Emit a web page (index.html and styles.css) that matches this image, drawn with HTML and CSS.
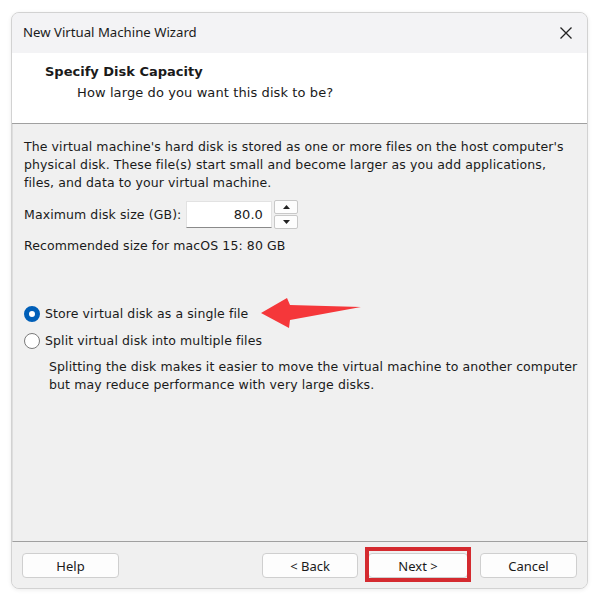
FILE: index.html
```html
<!DOCTYPE html>
<html>
<head>
<meta charset="utf-8">
<link rel="stylesheet" href="styles.css">
</head>
<body>
<div class="window">
  <div class="titlebar">
    <span class="title">New Virtual Machine Wizard</span>
    <svg class="close" width="14" height="14" viewBox="0 0 14 14"><path d="M1.5 1.5 L12.5 12.5 M12.5 1.5 L1.5 12.5" stroke="#222" stroke-width="1.3" fill="none"/></svg>
  </div>
  <div class="header">
    <div class="h-title">Specify Disk Capacity</div>
    <div class="h-sub">How large do you want this disk to be?</div>
  </div>
  <div class="content">
    <p class="desc">The virtual machine's hard disk is stored as one or more files on the host computer's<br>physical disk. These file(s) start small and become larger as you add applications,<br>files, and data to your virtual machine.</p>
    <div class="size-row">
      <span class="label">Maximum disk size (GB):</span>
      <div class="spin-input">80.0</div>
      <div class="spin-btns">
        <div class="spin-btn"><svg width="7" height="4" viewBox="0 0 7 4"><path d="M0 4 L3.5 0 L7 4Z" fill="#222"/></svg></div>
        <div class="spin-btn"><svg width="7" height="4" viewBox="0 0 7 4"><path d="M0 0 L3.5 4 L7 0Z" fill="#222"/></svg></div>
      </div>
    </div>
    <p class="rec">Recommended size for macOS 15: 80 GB</p>
    <div class="options">
      <div class="radio-row"><span class="radio checked"></span><span>Store virtual disk as a single file</span></div>
      <div class="radio-row"><span class="radio"></span><span>Split virtual disk into multiple files</span></div>
      <p class="split-desc">Splitting the disk makes it easier to move the virtual machine to another computer<br>but may reduce performance with very large disks.</p>
    </div>
  </div>
  <div class="footer">
    <button class="btn">Help</button>
    <div class="spacer"></div>
    <button class="btn back">&lt; Back</button>
    <button class="btn next">Next &gt;</button>
    <button class="btn cancel">Cancel</button>
  </div>
</div>
<svg class="arrow" width="110" height="40" viewBox="0 0 110 40"><polygon points="1,16 27,1 30,8 101,10 30,23 29,31" fill="#f5373a"/></svg>
</body>
</html>
```
FILE: styles.css
```css
html, body {
  margin: 0;
  padding: 0;
  background: #ffffff;
}
body {
  position: relative;
  width: 600px;
  height: 601px;
  font-family: "DejaVu Sans", sans-serif;
  font-size: 12.5px;
  letter-spacing: 0.1px;
  color: #1a1a1a;
}
.window {
  position: absolute;
  left: 11px;
  top: 12px;
  width: 575px;
  height: 575px;
  border: 1px solid #d2d2d2;
  border-radius: 8px;
  overflow: hidden;
  display: flex;
  flex-direction: column;
  background: #f0f0f0;
  box-shadow: 0 1px 4px rgba(0,0,0,0.08);
}
.titlebar {
  height: 40px;
  flex: none;
  background: #f3f3f5;
  display: flex;
  align-items: center;
  justify-content: space-between;
  padding: 0 14px 0 11px;
}
.title {
  font-family: "Noto Sans", sans-serif;
  font-size: 13.2px;
  letter-spacing: 0;
  color: #1b1b1b;
  margin-top: -2px;
}
.header {
  flex: none;
  background: #ffffff;
  border-bottom: 1px solid #a0a0a0;
  padding: 0 0 0 33px;
  box-sizing: border-box;
  height: 71px;
}
.h-title {
  font-weight: bold;
  font-size: 13px;
  margin-top: 10px;
  line-height: 18px;
  letter-spacing: 0;
}
.h-sub {
  font-size: 13px;
  margin-left: 32px;
  margin-top: 3px;
  line-height: 18px;
}
.content {
  flex: 1;
  padding: 14px 0 0 11px;
  border-bottom: 1px solid #a0a0a0;
  border-left: 1px solid #dedede;
  white-space: nowrap;
}
.desc {
  margin: 0;
  line-height: 18px;
}
.size-row {
  display: flex;
  align-items: center;
  margin-top: 8px;
  height: 28px;
}
.label { width: 162px; }
.spin-input {
  width: 86px;
  height: 27px;
  box-sizing: border-box;
  background: #fff;
  border: 1px solid #e2e2e2;
  border-bottom: 1px solid #8a8a8a;
  text-align: right;
  padding-right: 8px;
  line-height: 25px;
  font-size: 13px;
}
.spin-btns {
  margin-left: 2px;
  display: flex;
  flex-direction: column;
  gap: 1px;
}
.spin-btn {
  width: 22px;
  height: 12px;
  background: #fdfdfd;
  border: 1px solid #c8c8c8;
  border-radius: 2px;
  display: flex;
  align-items: center;
  justify-content: center;
}
.rec {
  margin: 9px 0 0;
  line-height: 18px;
}
.options {
  margin-top: 45px;
}
.radio-row {
  display: flex;
  align-items: center;
  height: 27px;
  gap: 5px;
}
.radio {
  width: 16px;
  height: 16px;
  box-sizing: border-box;
  border-radius: 50%;
  border: 1px solid #7a7a7a;
  background: #fff;
  flex: none;
}
.radio.checked {
  border: 5px solid #005fb8;
  background: #fff;
}
.split-desc {
  margin: 4px 0 0 25px;
  line-height: 18px;
}
.footer {
  height: 46px;
  flex: none;
  display: flex;
  align-items: flex-start;
  padding: 11px 10px 0 10px;
  box-sizing: border-box;
  background: #f0f0f0;
}
.spacer { flex: 1; }
.btn {
  position: relative;
  height: 25px;
  box-sizing: border-box;
  background: #fdfdfd;
  border: 1px solid #cfcfcf;
  border-radius: 4px;
  font-family: "Noto Sans", sans-serif;
  font-size: 13px;
  color: #1a1a1a;
  padding: 0;
  width: 97px;
}
.back { width: 96px; margin-right: 10px; }
.next { width: 100px; margin-right: 12px; }
.next::after {
  content: "";
  position: absolute;
  left: -4px;
  right: -4px;
  top: -7px;
  bottom: -5px;
  border: 4px solid #d42a2f;
}
.arrow {
  position: absolute;
  left: 260px;
  top: 297px;
}
```
